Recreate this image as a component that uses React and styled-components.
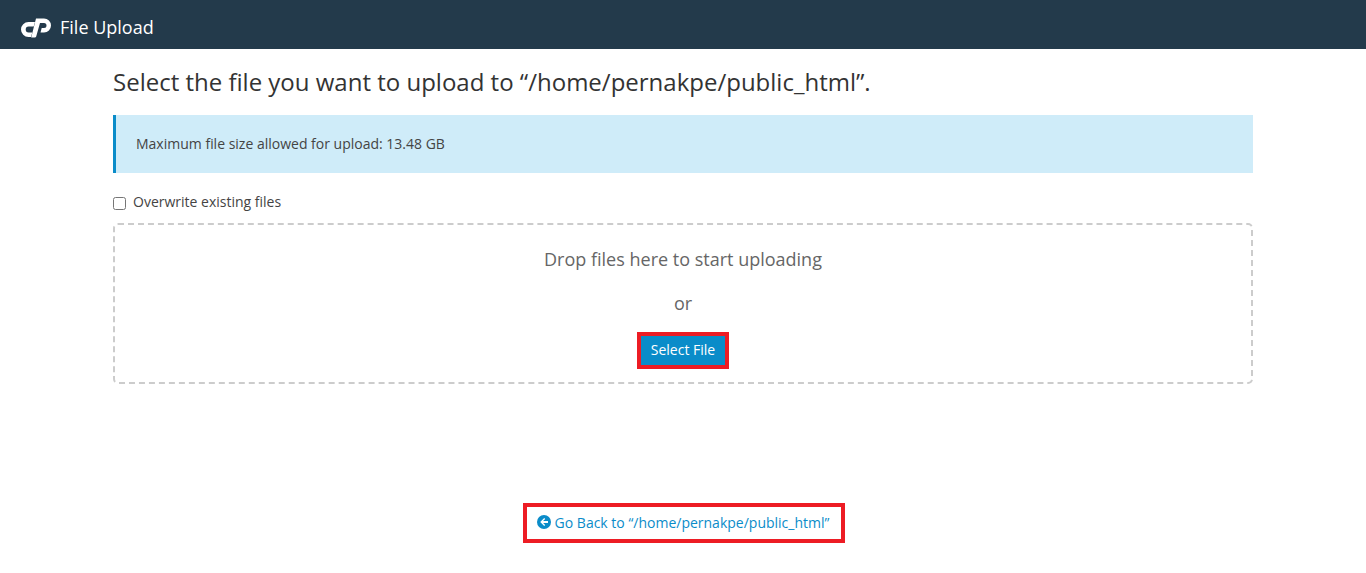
import React from "react";
import styled, { createGlobalStyle } from "styled-components";

const Global = createGlobalStyle`
  html, body { margin: 0; padding: 0; background: #fff; }
  body { font-family: "Open Sans", "Liberation Sans", sans-serif; color: #333; font-size: 14px; }
`;

const TopBar = styled.header`
  height: 49px;
  box-sizing: border-box;
  background: #233a4b;
  display: flex;
  align-items: center;
  padding: 4px 0 0 21px;
  gap: 9px;
`;
const Logo = styled.svg`
  width: 30px;
  height: 20px;
  margin-top: 2px;
  display: block;
  fill: #fff;
`;
const AppTitle = styled.span`
  color: #fff;
  font-size: 18px;
  line-height: 24px;
`;
const Main = styled.main`
  width: 1140px;
  margin: 0 auto;
`;
const Heading = styled.h1`
  margin: 0;
  padding-top: 16px;
  font-size: 24px;
  font-weight: 400;
  line-height: 33px;
  color: #333;
`;
const Notice = styled.div`
  margin-top: 17px;
  height: 58px;
  box-sizing: border-box;
  background: #cfecf9;
  border-left: 3px solid #0a8cc9;
  padding: 0 0 2px 20px;
  display: flex;
  align-items: center;
  font-size: 14px;
  color: #444;
`;
const CheckLabel = styled.label`
  margin-top: 18px;
  display: flex;
  align-items: center;
  height: 20px;
  gap: 7px;
  font-size: 14px;
  color: #444;
`;
const Check = styled.input`
  margin: 5px 0 0;
  width: 13px;
  height: 13px;
`;
const DropZone = styled.section`
  margin-top: 12px;
  height: 161px;
  box-sizing: border-box;
  border: 2px dashed #ccc;
  border-radius: 5px;
  display: flex;
  flex-direction: column;
  align-items: center;
  padding-top: 21px;
  color: #666;
`;
const DropText = styled.div`
  font-size: 18px;
  line-height: 26px;
`;
const OrText = styled(DropText)`
  margin-top: 18px;
`;
const SelectButton = styled.button`
  margin-top: 20px;
  width: 84px;
  height: 29px;
  box-sizing: border-box;
  border: 0;
  padding: 0 0 2px;
  background: #0a8cc9;
  color: #fff;
  font: inherit;
  font-size: 14px;
  outline: 4px solid #ed1c24;
`;
const BackWrap = styled.div`
  margin-top: 119px;
  padding-left: 2px;
  display: flex;
  justify-content: center;
`;
const BackLink = styled.a`
  display: flex;
  align-items: center;
  box-sizing: border-box;
  width: 322px;
  height: 40px;
  border: 4px solid #ed1c24;
  padding: 0 2px 2px 0;
  justify-content: center;
  gap: 4px;
  color: #0a8cc9;
  font-size: 14px;
  text-decoration: none;
`;
const BackIcon = styled.svg`
  width: 14px;
  height: 14px;
  display: block;
`;

export default function App() {
  return (
    <>
      <Global />
      <TopBar>
        <Logo viewBox="0 0 30 20" aria-hidden="true">
          <path d="M14 4H7.5a7.5 7.5 0 0 0 0 15H10l1.3-4.6H7.6a2.9 2.9 0 0 1 0-5.8h5.1z" />
          <path d="M15 .5h8a7 7 0 0 1 0 14h-3.5l1.2-4.5H23a2.5 2.5 0 0 0 0-5h-4l-3.8 13.5a1.5 1.5 0 0 1-1.4 1h-3.6z" />
        </Logo>
        <AppTitle>File Upload</AppTitle>
      </TopBar>
      <Main>
        <Heading>Select the file you want to upload to “/home/pernakpe/public_html”.</Heading>
        <Notice>Maximum file size allowed for upload: 13.48 GB</Notice>
        <CheckLabel>
          <Check type="checkbox" />
          Overwrite existing files
        </CheckLabel>
        <DropZone>
          <DropText>Drop files here to start uploading</DropText>
          <OrText>or</OrText>
          <SelectButton>Select File</SelectButton>
        </DropZone>
        <BackWrap>
          <BackLink href="#">
            <BackIcon viewBox="0 0 14 14" aria-hidden="true">
              <circle cx="7" cy="7" r="7" fill="#0a8cc9" />
              <path d="M7.2 3 3.2 7l4 4 1-1-2.1-2.1H11V6.1H6.1L8.2 4z" fill="#fff" />
            </BackIcon>
            Go Back to “/home/pernakpe/public_html”
          </BackLink>
        </BackWrap>
      </Main>
    </>
  );
}
